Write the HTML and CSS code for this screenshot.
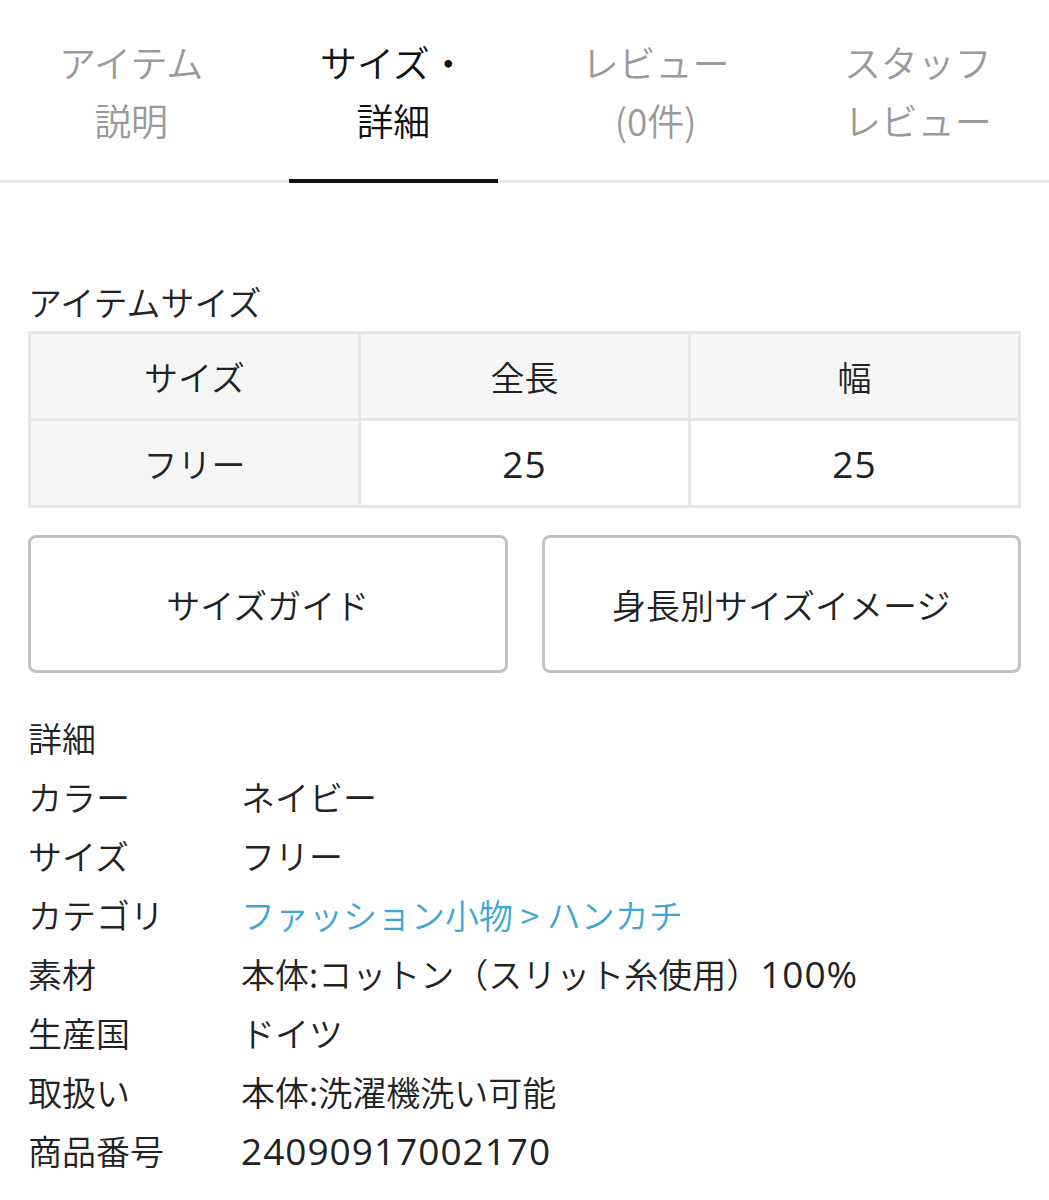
FILE: index.html
```html
<!DOCTYPE html>
<html lang="ja">
<head>
  <meta charset="UTF-8">
  <meta name="viewport" content="width=device-width, initial-scale=1.0">
  <title>サイズ・詳細</title>
  <link rel="stylesheet" href="styles.css">
</head>
<body>
  <nav class="tabs">
    <div class="tab">アイテム<br>説明</div>
    <div class="tab active">サイズ・<br>詳細</div>
    <div class="tab">レビュー<br>(0件)</div>
    <div class="tab">スタッフ<br>レビュー</div>
  </nav>

  <main class="content">
    <h2 class="section-title">アイテムサイズ</h2>
    <table class="size-table">
      <tr class="head">
        <td>サイズ</td>
        <td>全長</td>
        <td>幅</td>
      </tr>
      <tr>
        <td class="label">フリー</td>
        <td class="num">25</td>
        <td class="num">25</td>
      </tr>
    </table>

    <div class="size-buttons">
      <button class="size-btn">サイズガイド</button>
      <button class="size-btn">身長別サイズイメージ</button>
    </div>

    <h2 class="details-title">詳細</h2>
    <dl class="details">
      <div class="row"><dt>カラー</dt><dd>ネイビー</dd></div>
      <div class="row"><dt>サイズ</dt><dd>フリー</dd></div>
      <div class="row"><dt>カテゴリ</dt><dd><a href="#">ファッション小物 &gt; ハンカチ</a></dd></div>
      <div class="row"><dt>素材</dt><dd>本体:コットン（スリット糸使用）<span class="num">100%</span></dd></div>
      <div class="row"><dt>生産国</dt><dd>ドイツ</dd></div>
      <div class="row"><dt>取扱い</dt><dd>本体:洗濯機洗い可能</dd></div>
      <div class="row"><dt>商品番号</dt><dd class="num">24090917002170</dd></div>
    </dl>
  </main>
</body>
</html>
```

FILE: styles.css
```css
* {
  margin: 0;
  padding: 0;
  box-sizing: border-box;
}

body {
  font-family: "Noto Sans CJK JP", "Noto Sans", sans-serif;
  font-weight: 350;
  color: #222;
  background: #fff;
}

/* digits are wider in the original font */
.num {
  font-family: "Open Sans", sans-serif;
  font-weight: 400;
  font-size: 37px;
  letter-spacing: 1px;
}

/* tab bar */
.tabs {
  display: grid;
  grid-template-columns: repeat(4, 1fr);
  border-bottom: 3px solid #e8e8e8;
}

.tab {
  position: relative;
  text-align: center;
  font-size: 37px;
  line-height: 58px;
  padding: 33px 0 31px;
  color: #9a9a9a;
}

.tab.active {
  color: #111;
}

.tab.active::after {
  content: '';
  position: absolute;
  left: 50%;
  bottom: -3px;
  width: 209px;
  height: 4px;
  margin-left: -104px;
  background: #111;
}

.content {
  padding: 0 28px;
}

.section-title {
  font-size: 34px;
  font-weight: 350;
  line-height: 46px;
  margin-top: 96px;
}

/* size table */
.size-table {
  width: 100%;
  margin-top: 6px;
  border-collapse: collapse;
  table-layout: fixed;
  font-size: 34px;
}

.size-table td {
  height: 87px;
  border: 3px solid #e6e6e6;
  text-align: center;
  vertical-align: middle;
}

.size-table .head td,
.size-table .label {
  background: #f6f6f6;
}

.size-buttons {
  display: grid;
  grid-template-columns: 1fr 1fr;
  gap: 34px;
  margin-top: 27px;
}

.size-btn {
  height: 138px;
  background: #fff;
  border: 3px solid #c2c2c2;
  border-radius: 8px;
  font-family: inherit;
  font-weight: 350;
  font-size: 34px;
  color: #222;
}

/* details list */
.details-title {
  font-size: 34px;
  font-weight: 350;
  line-height: 59px;
  margin-top: 35px;
}

.details {
  font-size: 34px;
  line-height: 59px;
}

.details .row {
  display: flex;
}

.details dt {
  width: 213px;
  flex-shrink: 0;
}

.details a {
  color: #3ea6d4;
  text-decoration: none;
}
```
